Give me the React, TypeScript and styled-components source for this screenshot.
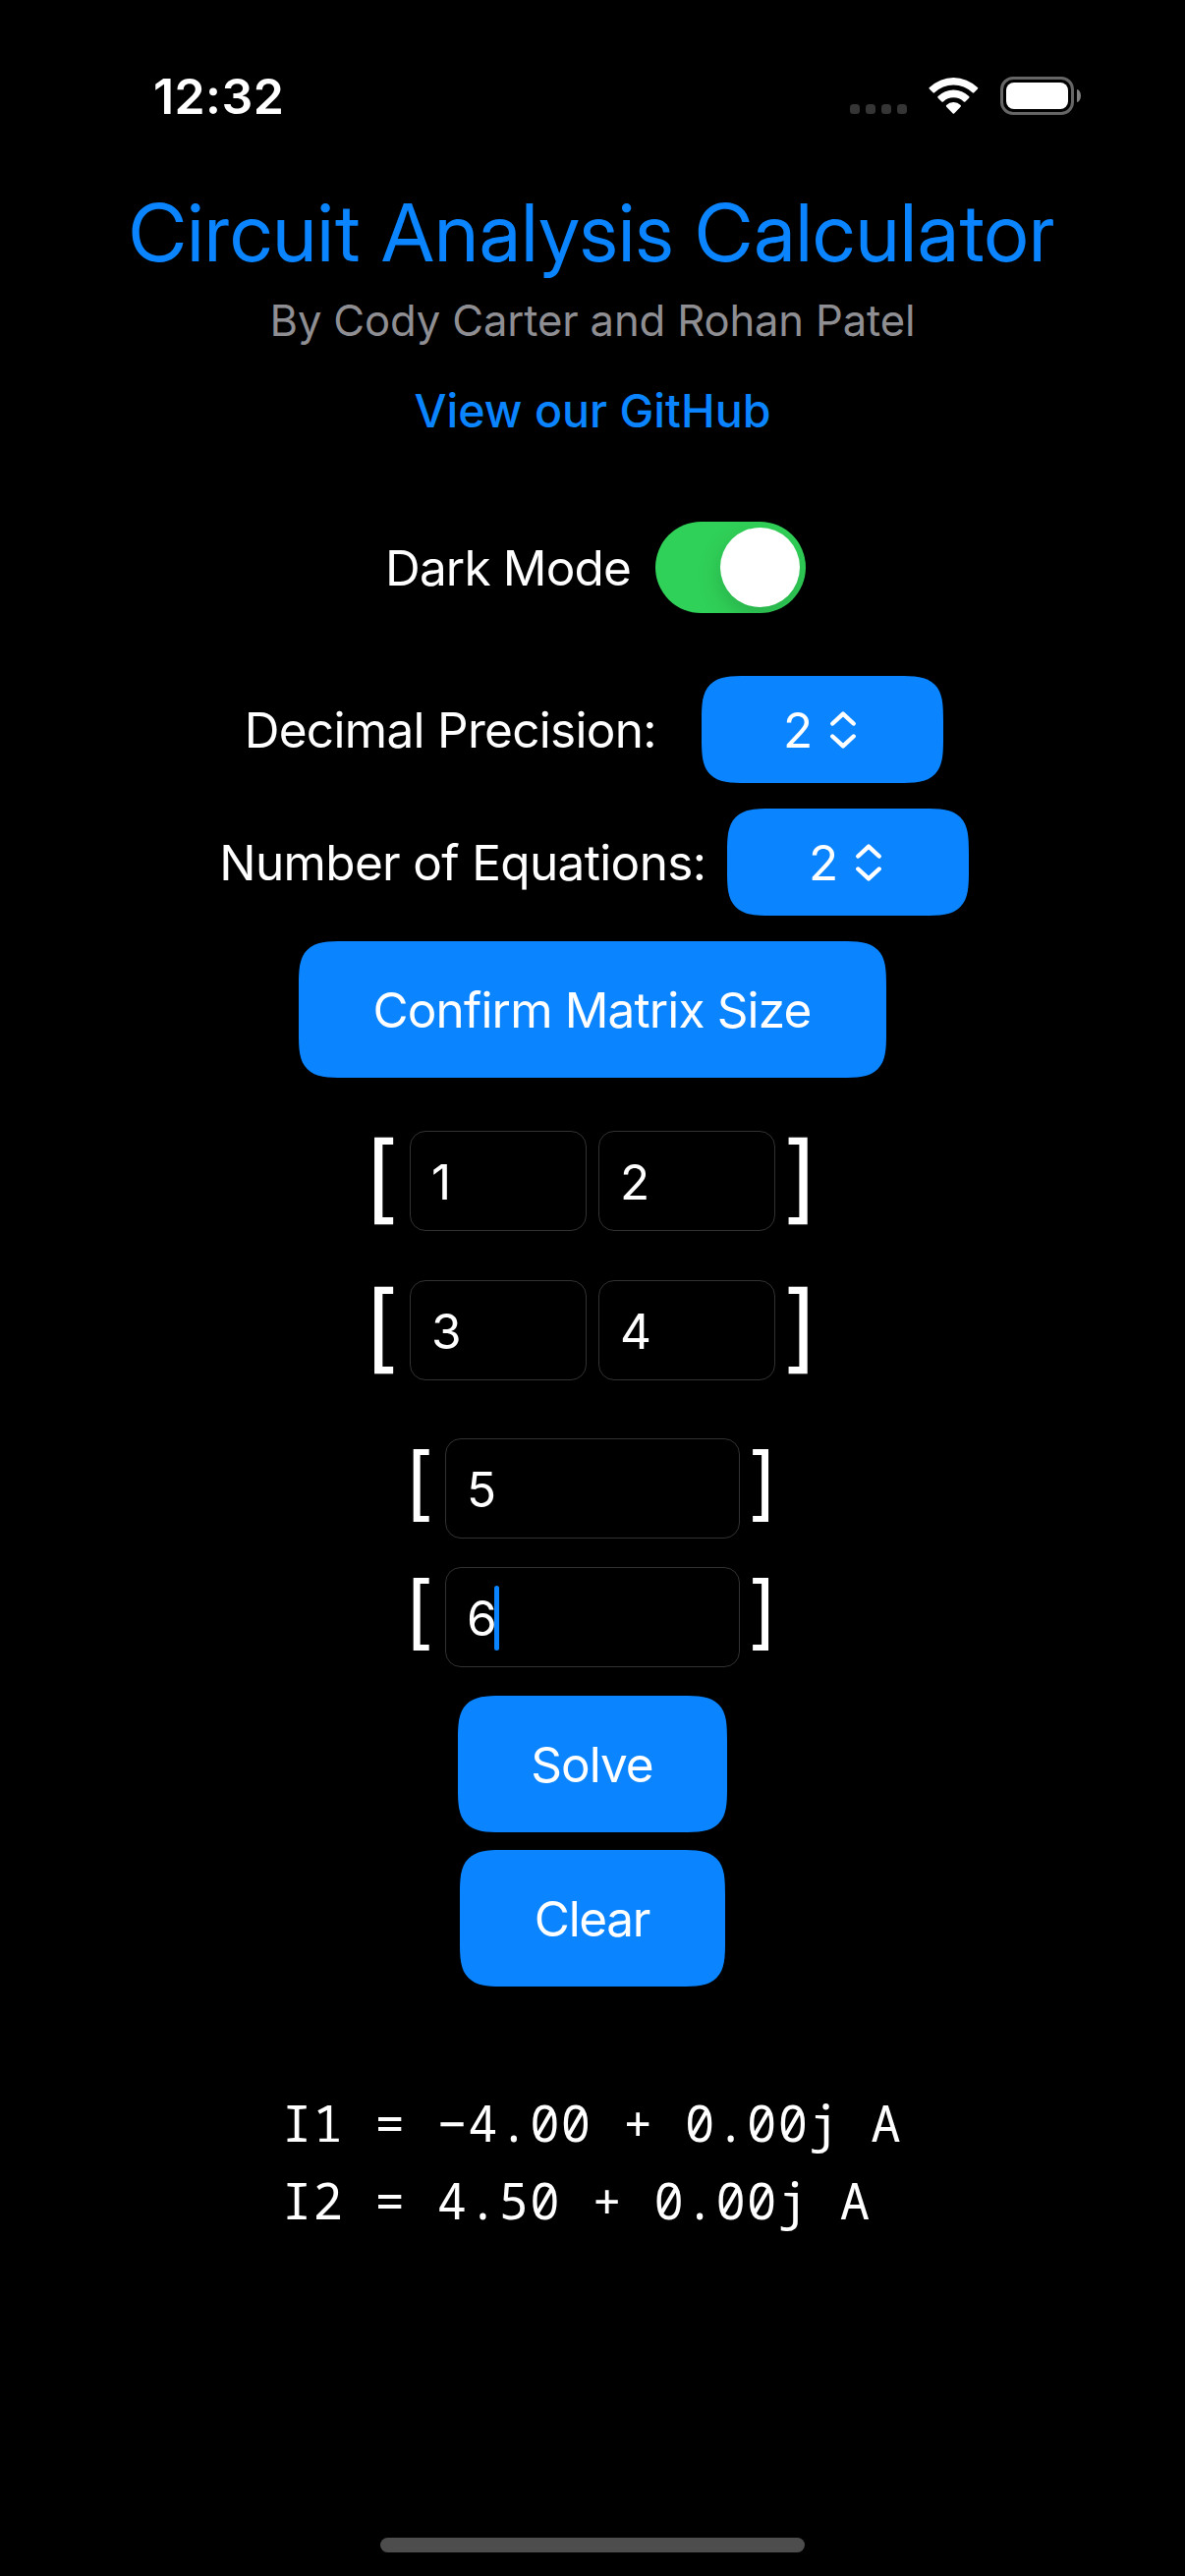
import React from 'react';
import styled, { createGlobalStyle } from 'styled-components';

const blue = '#0a84ff';

const GlobalStyle = createGlobalStyle`
  * { box-sizing: border-box; }
  body { margin: 0; background: #000; }
`;

const Screen = styled.div`
  width: 1206px;
  height: 2622px;
  display: flex;
  flex-direction: column;
  align-items: center;
  background: #000;
  color: #fff;
  font-family: Inter, 'Liberation Sans', sans-serif;
  font-size: 49.5px;
  white-space: nowrap;
  overflow: hidden;
`;

const StatusBar = styled.header`
  width: 100%;
  height: 186px;
  padding: 68px 106px 0 156px;
  display: flex;
  justify-content: space-between;
  align-items: flex-start;
`;

const Time = styled.span`
  font-size: 50px;
  font-weight: 600;
  line-height: 60px;
  letter-spacing: 0.4px;
`;

const StatusIcons = styled.div`
  display: flex;
  align-items: flex-start;
  padding-top: 10px;
`;

const SignalDots = styled.div`
  display: flex;
  gap: 6px;
  padding-top: 28px;
  margin-right: 22px;
`;

const Dot = styled.i`
  width: 10px;
  height: 10px;
  border-radius: 3.5px;
  background: #353535;
`;

const WifiIcon = styled.svg`
  width: 51px;
  height: 38px;
  margin: 1px 22px 0 0;
`;

const Battery = styled.div`
  width: 75px;
  height: 39px;
  padding: 3px;
  border: 3px solid #666;
  border-radius: 13px;
`;

const BatteryLevel = styled.div`
  height: 100%;
  border-radius: 8px;
  background: #fff;
`;

const BatteryNub = styled.div`
  width: 4px;
  height: 13px;
  margin: 13px 0 0 3px;
  border-radius: 0 4px 4px 0 / 0 6.5px 6.5px 0;
  background: #808080;
`;

const Title = styled.h1`
  margin: 0;
  padding-right: 1px;
  font-family: 'Inter Display', Inter, sans-serif;
  font-size: 81.5px;
  font-weight: 400;
  line-height: 102px;
  letter-spacing: 0.72px;
  color: ${blue};
`;

const Byline = styled.p`
  margin: 9px 0 0;
  font-size: 43.6px;
  line-height: 60px;
  letter-spacing: -0.15px;
  color: #8e8e93;
`;

const RepoLink = styled.a`
  margin-top: 33px;
  font-size: 46.6px;
  font-weight: 500;
  line-height: 57px;
  color: ${blue};
  text-decoration: none;
`;

const SettingRow = styled.div<{ $width: number; $top: number }>`
  width: ${p => p.$width}px;
  margin-top: ${p => p.$top}px;
  display: flex;
  justify-content: space-between;
  align-items: center;
`;

const SettingLabel = styled.span<{ $indent: number; $tracking: number }>`
  padding: 1px 0 0 ${p => p.$indent}px;
  line-height: 60px;
  letter-spacing: ${p => p.$tracking}px;
`;

const Switch = styled.div`
  width: 153px;
  height: 93px;
  padding: 6px;
  display: flex;
  justify-content: flex-end;
  border-radius: 46.5px;
  background: #30d158;
  overflow: hidden;
`;

const SwitchThumb = styled.div`
  width: 81px;
  height: 81px;
  border-radius: 50%;
  background: #fff;
  box-shadow: 0 9px 24px rgba(0, 0, 0, 0.17);
`;

const Select = styled.div`
  width: 246px;
  height: 109px;
  padding-left: 83px;
  display: flex;
  align-items: center;
  gap: 17.5px;
  border-radius: 30px;
  background: ${blue};
  @supports (corner-shape: superellipse(1.71)) {
    border-radius: 46px;
    corner-shape: superellipse(1.71);
  }
`;

const SelectIcon = styled.svg`
  width: 26px;
  height: 38px;
`;

const Button = styled.button<{ $width: number; $top: number; $tracking: number }>`
  width: ${p => p.$width}px;
  height: 139px;
  margin: ${p => p.$top}px 0 0;
  padding: 1px 1px 0 0;
  border: 0;
  border-radius: 30px;
  background: ${blue};
  color: #fff;
  font: inherit;
  letter-spacing: ${p => p.$tracking}px;
  @supports (corner-shape: superellipse(1.71)) {
    border-radius: 46px;
    corner-shape: superellipse(1.71);
  }
`;

const MatrixRow = styled.div<{ $top: number }>`
  margin-top: ${p => p.$top}px;
  height: 102px;
  display: flex;
  align-items: center;
`;

const Bracket = styled.span<{ $size: number; $pad: number; $lift: number }>`
  width: 49px;
  padding: 0 0 ${p => p.$lift}px ${p => p.$pad}px;
  font-size: ${p => p.$size}px;
  line-height: 100px;
`;

const Field = styled.div<{ $width: number }>`
  width: ${p => p.$width}px;
  height: 102px;
  padding: 2px 0 0 21px;
  display: flex;
  align-items: center;
  border: 1px solid #323234;
  border-radius: 16px;
  & + & { margin-left: 12px; }
`;

const Caret = styled.i`
  width: 5.5px;
  height: 66px;
  margin-left: -3px;
  border-radius: 2.5px;
  background: ${blue};
`;

const Results = styled.pre`
  width: 636px;
  margin: 99px 0 0;
  padding-left: 2px;
  font-family: 'Noto Sans Mono', 'DejaVu Sans Mono', monospace;
  font-size: 50.5px;
  line-height: 79px;
  letter-spacing: 1.24px;
`;

const HomeIndicator = styled.div`
  width: 432px;
  height: 15px;
  margin: auto 0 24px;
  border-radius: 7.5px;
  background: #4d4d4d;
`;

const Chevrons = () => (
  <SelectIcon viewBox="0 0 26 38" fill="none" stroke="#fff" strokeWidth="4.4" strokeLinecap="round" strokeLinejoin="round">
    <path d="M2.3 12.5 13 2.6l10.7 9.9M2.3 25.5 13 35.4l10.7-9.9" />
  </SelectIcon>
);

const Wifi = () => (
  <WifiIcon viewBox="0 0 51 38" fill="#fff">
    <path d="M.9 10.1A35 35 0 0 1 49.9 10.1Q50.7 10.8 50 11.5L46.3 15.2Q45.5 16 44.7 15.3A27.5 27.5 0 0 0 6.1 15.3Q5.3 16 4.5 15.2L.8 11.5Q.1 10.8.9 10.1Z" />
    <path d="M9.6 19.1A22.5 22.5 0 0 1 41.2 19.1Q42 19.9 41.2 20.7L37.4 24.5Q36.6 25.2 35.8 24.5A15 15 0 0 0 15 24.5Q14.2 25.2 13.4 24.5L9.6 20.7Q8.8 19.9 9.6 19.1Z" />
    <path d="M18.2 28.1A10 10 0 0 1 32.6 28.1Q33.4 28.9 32.6 29.7L26.1 36.5Q25.4 37.2 24.7 36.5L18.2 29.7Q17.4 28.9 18.2 28.1Z" />
  </WifiIcon>
);

const coefficients = [['1', '2'], ['3', '4']];
const constants = ['5', '6'];

export default function App() {
  return (
    <Screen>
      <GlobalStyle />
      <StatusBar>
        <Time>12:32</Time>
        <StatusIcons>
          <SignalDots><Dot /><Dot /><Dot /><Dot /></SignalDots>
          <Wifi />
          <Battery><BatteryLevel /></Battery>
          <BatteryNub />
        </StatusIcons>
      </StatusBar>

      <Title>Circuit Analysis Calculator</Title>
      <Byline>By Cody Carter and Rohan Patel</Byline>
      <RepoLink href="#">View our GitHub</RepoLink>

      <SettingRow $width={434} $top={84}>
        <SettingLabel $indent={6} $tracking={-0.84}>Dark Mode</SettingLabel>
        <Switch><SwitchThumb /></Switch>
      </SettingRow>
      <SettingRow $width={714} $top={64}>
        <SettingLabel $indent={2.7} $tracking={-0.7}>Decimal Precision:</SettingLabel>
        <Select><span>2</span><Chevrons /></Select>
      </SettingRow>
      <SettingRow $width={766} $top={26}>
        <SettingLabel $indent={3.3} $tracking={-0.66}>Number of Equations:</SettingLabel>
        <Select><span>2</span><Chevrons /></Select>
      </SettingRow>
      <Button $width={598} $top={26} $tracking={-0.86}>Confirm Matrix Size</Button>

      {coefficients.map((row, i) => (
        <MatrixRow key={i} $top={i === 0 ? 54 : 50}>
          <Bracket $size={98} $pad={2.2} $lift={9}>[</Bracket>
          {row.map((value, j) => <Field key={j} $width={180}>{value}</Field>)}
          <Bracket $size={98} $pad={7.8} $lift={9}>]</Bracket>
        </MatrixRow>
      ))}
      {constants.map((value, i) => (
        <MatrixRow key={value} $top={i === 0 ? 59 : 29}>
          <Bracket $size={81.7} $pad={7.8} $lift={12}>[</Bracket>
          <Field $width={300}>{value}{i === 1 && <Caret />}</Field>
          <Bracket $size={81.7} $pad={8.2} $lift={12}>]</Bracket>
        </MatrixRow>
      ))}

      <Button $width={274} $top={29} $tracking={-1}>Solve</Button>
      <Button $width={270} $top={18} $tracking={-1.3}>Clear</Button>

      <Results>{'I1 = −4.00 + 0.00j A\nI2 = 4.50 + 0.00j A'}</Results>
      <HomeIndicator />
    </Screen>
  );
}
